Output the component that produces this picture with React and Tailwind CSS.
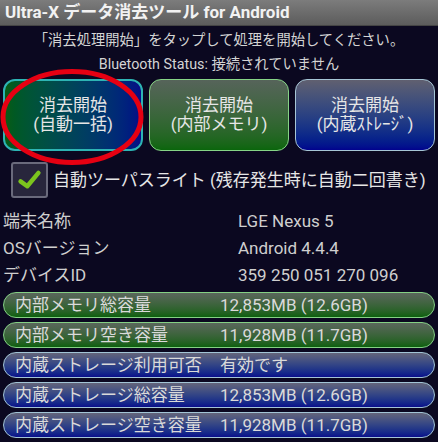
import React from 'react';

const font = { fontFamily: 'Roboto, "Noto Sans CJK JP", sans-serif' };

const buttons = [
  {
    line2: '(自動一括)',
    cls: 'border-2 border-[#2db4b4] bg-gradient-to-r from-[#0a5c12] to-[#0a0a86]',
  },
  {
    line2: '(内部メモリ)',
    cls: 'border-[1.5px] border-[#86d486] bg-gradient-to-b from-[#56645a] to-[#0a660c]',
  },
  {
    line2: '(内蔵ｽﾄﾚｰｼﾞ)',
    cls: 'border-[1.5px] border-[#a6c6d6] bg-gradient-to-b from-[#606070] to-[#02028e]',
  },
];

const info = [
  ['端末名称', 'LGE Nexus 5'],
  ['OSバージョン', 'Android 4.4.4'],
  ['デバイスID', '359 250 051 270 096'],
];

const pills = [
  ['内部メモリ総容量', '12,853MB (12.6GB)', 'green'],
  ['内部メモリ空き容量', '11,928MB (11.7GB)', 'green'],
  ['内蔵ストレージ利用可否', '有効です', 'blue'],
  ['内蔵ストレージ総容量', '12,853MB (12.6GB)', 'blue'],
  ['内蔵ストレージ空き容量', '11,928MB (11.7GB)', 'blue'],
];

export default function App() {
  return (
    <div className="w-[438px] h-[442px] overflow-hidden bg-[#0b0820] text-[#dcdcdc] flex flex-col" style={font}>
      {/* Title bar */}
      <div className="h-[26px] flex items-center px-[5px] bg-gradient-to-b from-[#7c7c7c] to-[#5c5c5c] border-b border-[#444]">
        <span className="text-[17px] font-bold text-[#f2f2f2] leading-none">Ultra-X データ消去ツール for Android</span>
      </div>

      <div className="pt-[4px] text-center text-[14.3px] leading-[20px] text-[#d4d4d4]">
        「消去処理開始」をタップして処理を開始してください。
      </div>
      <div className="mt-[4px] text-center text-[14.3px] leading-[20px] text-[#d4d4d4]">
        Bluetooth Status: 接続されていません
      </div>

      {/* Erase buttons */}
      <div className="relative mt-[5px]">
        <div className="grid grid-cols-3 gap-[6px] px-[3px]">
          {buttons.map((b, i) => (
            <div
              key={i}
              className={`h-[72px] rounded-[12px] flex flex-col items-center justify-center text-[17px] leading-[19px] text-[#e6e6e6] ${b.cls}`}
            >
              <span>消去開始</span>
              <span>{b.line2}</span>
            </div>
          ))}
        </div>
        {/* red marker circle */}
        <svg className="absolute left-0 top-[-14px] pointer-events-none" width="150" height="110" viewBox="0 0 150 110">
          <ellipse cx="72" cy="52" rx="69" ry="45.5" fill="none" stroke="#e60012" strokeWidth="5" />
        </svg>
      </div>

      {/* Two-pass checkbox */}
      <div className="mt-[11px] flex items-center pl-[11px]">
        <div className="w-[37px] h-[36px] rounded-[3px] border-2 border-[#6a6a7c] bg-[#28263c] flex items-center justify-center">
          <svg width="37" height="36" viewBox="0 0 37 36">
            <path d="M8.5 19.5 L16 25 L28.5 10" fill="none" stroke="#7cc41e" strokeWidth="5" strokeLinecap="round" strokeLinejoin="round" />
          </svg>
        </div>
        <span className="ml-[5px] text-[17px] leading-[20px] text-[#e6e6e6]">自動ツーパスライト (残存発生時に自動二回書き)</span>
      </div>

      {/* Device info */}
      <div className="mt-[10px] flex flex-col px-[3px]">
        {info.map(([k, v]) => (
          <div key={k} className="h-[27px] grid grid-cols-[235px_1fr] items-center text-[17px] text-[#cfcfcf]">
            <span>{k}</span>
            <span>{v}</span>
          </div>
        ))}
      </div>

      {/* Capacity pills */}
      <div className="mt-[3px] flex flex-col gap-[4px] pl-[3px] pr-[3px]">
        {pills.map(([k, v, c]) => (
          <div
            key={k}
            className={`h-[26px] rounded-full border-[1.5px] grid grid-cols-[205px_1fr] items-center pl-[11px] text-[17px] leading-none text-[#dadada] ${
              c === 'green'
                ? 'border-[#84d084] bg-gradient-to-b from-[#5a665c] to-[#0a600c]'
                : 'border-[#a2c4d6] bg-gradient-to-b from-[#64647a] to-[#0c0c8c]'
            }`}
          >
            <span className="whitespace-nowrap">{k}</span>
            <span className="whitespace-nowrap">{v}</span>
          </div>
        ))}
      </div>
    </div>
  );
}
